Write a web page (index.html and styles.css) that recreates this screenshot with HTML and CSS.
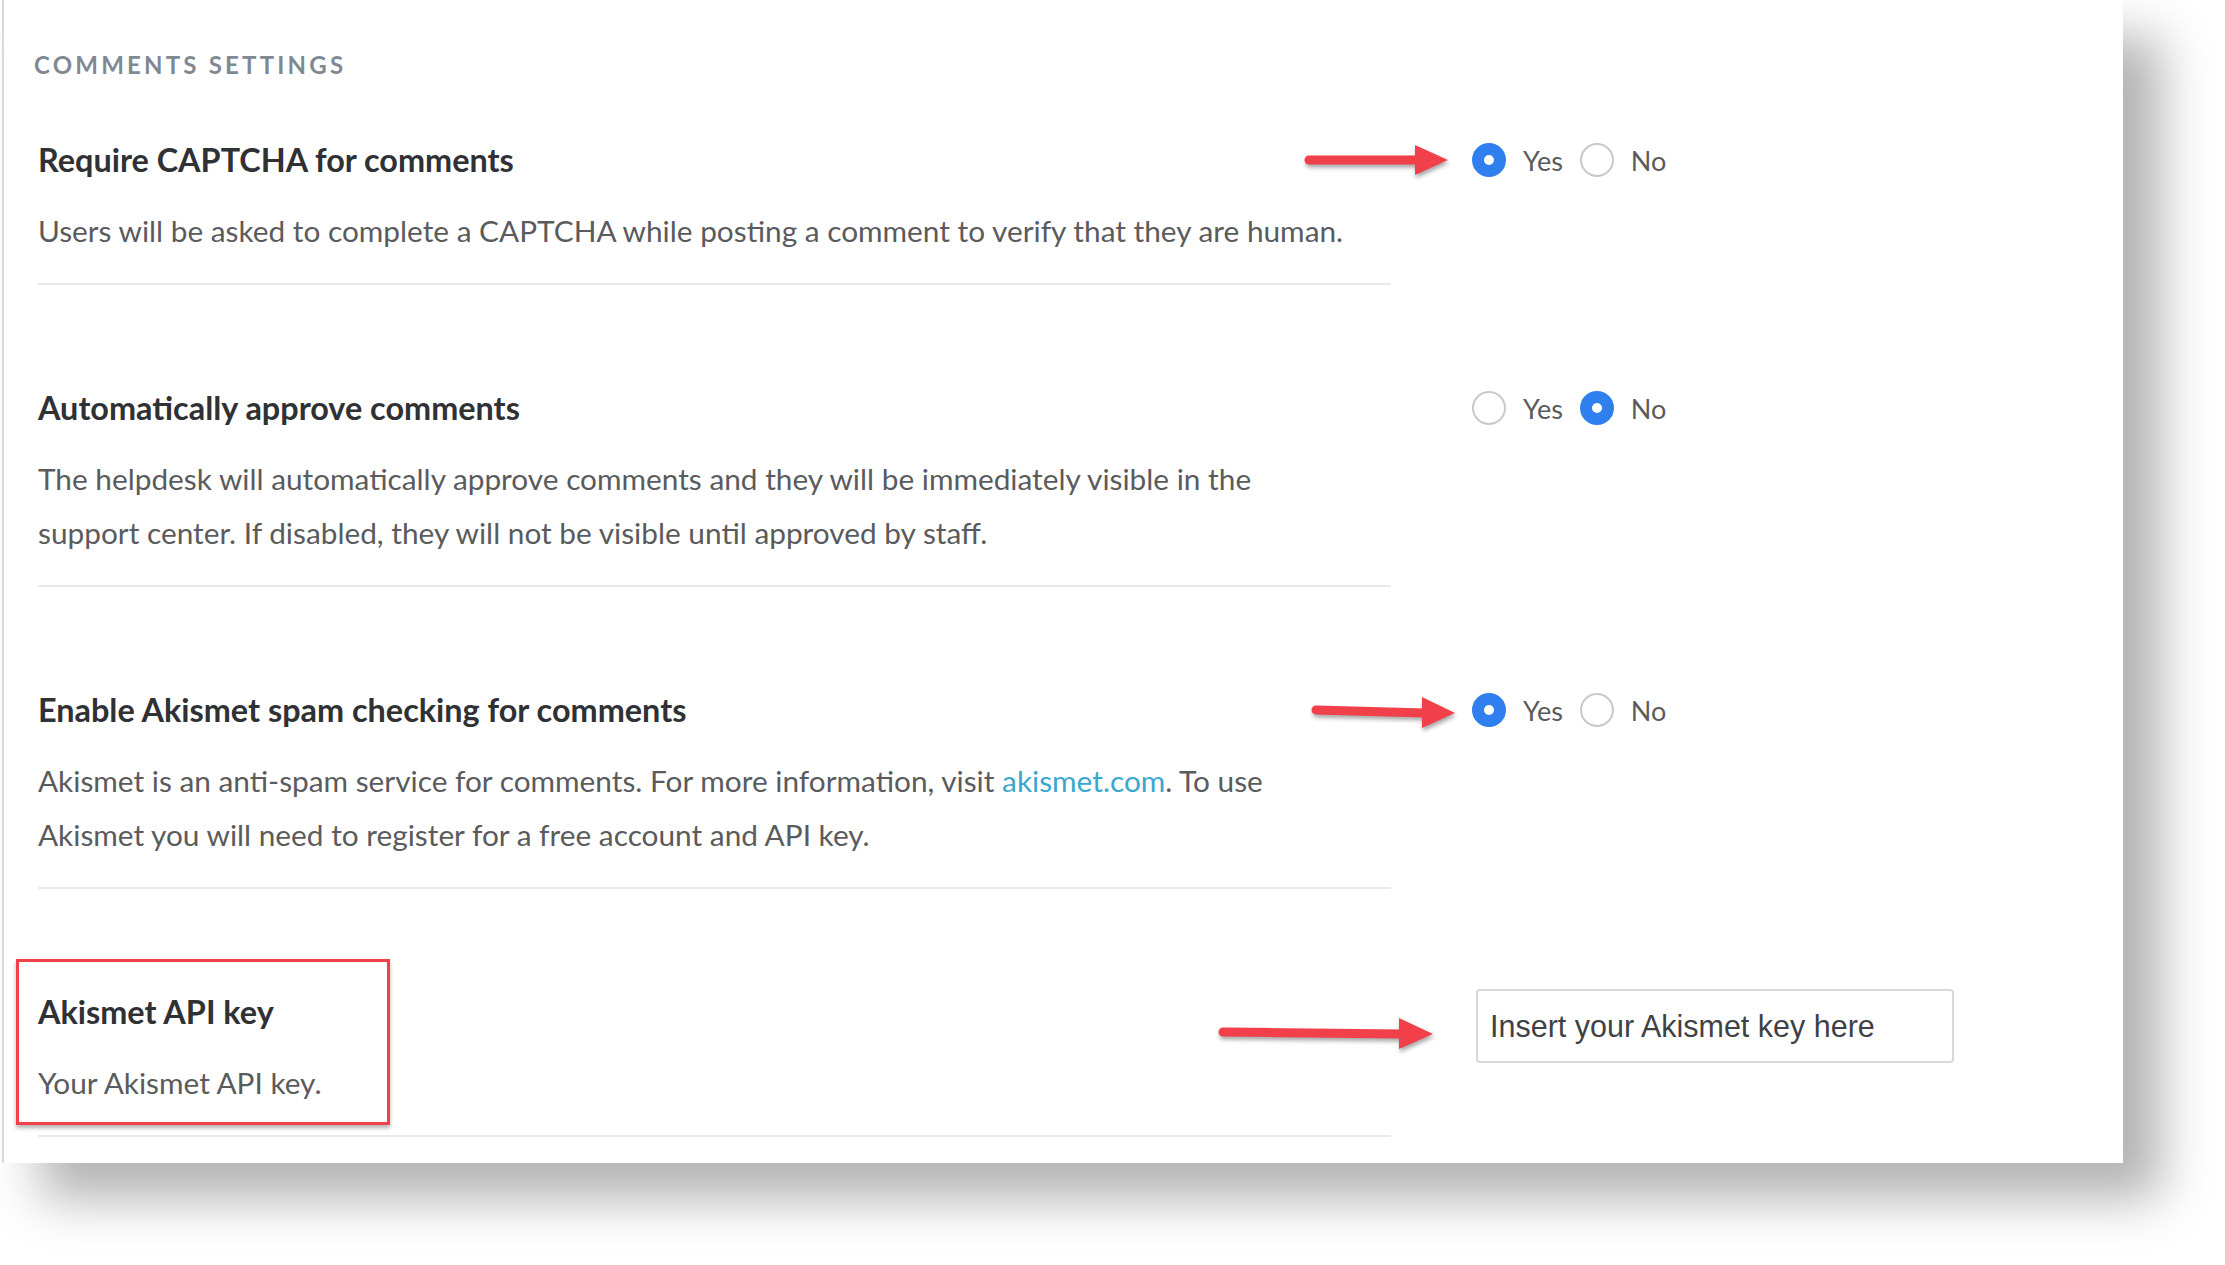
FILE: index.html
```html
<!DOCTYPE html>
<html lang="en">
<head>
  <meta charset="UTF-8" />
  <meta name="viewport" content="width=device-width, initial-scale=1.0" />
  <title>Comments settings</title>
  <link rel="stylesheet" href="styles.css">
</head>
<body>
  <div class="panel">
    <h3 class="section-title">COMMENTS SETTINGS</h3>

    <div class="setting first">
      <div class="setting-text">
        <h4>Require CAPTCHA for comments</h4>
        <p>Users will be asked to complete a CAPTCHA while posting a comment to verify that they are human.</p>
      </div>
      <div class="setting-control">
        <svg class="arrow arrow-captcha" viewBox="0 0 145 34"><line x1="6" y1="17" x2="116" y2="17" /><polygon points="112,2 145,17 112,32" /></svg>
        <label class="radio"><span class="dot checked"></span>Yes</label>
        <label class="radio"><span class="dot"></span>No</label>
      </div>
    </div>

    <div class="setting">
      <div class="setting-text">
        <h4>Automatically approve comments</h4>
        <p>The helpdesk will automatically approve comments and they will be immediately visible in the<br>support center. If disabled, they will not be visible until approved by staff.</p>
      </div>
      <div class="setting-control">
        <label class="radio"><span class="dot"></span>Yes</label>
        <label class="radio"><span class="dot checked"></span>No</label>
      </div>
    </div>

    <div class="setting">
      <div class="setting-text">
        <h4>Enable Akismet spam checking for comments</h4>
        <p>Akismet is an anti-spam service for comments. For more information, visit <a href="#">akismet.com</a>. To use<br>Akismet you will need to register for a free account and API key.</p>
      </div>
      <div class="setting-control">
        <svg class="arrow arrow-akismet" viewBox="0 0 145 34"><line x1="6" y1="15" x2="116" y2="18" /><polygon points="112,2 145,18 112,33" /></svg>
        <label class="radio"><span class="dot checked"></span>Yes</label>
        <label class="radio"><span class="dot"></span>No</label>
      </div>
    </div>

    <div class="setting last">
      <div class="setting-text">
        <div class="highlight"></div>
        <h4>Akismet API key</h4>
        <p>Your Akismet API key.</p>
      </div>
      <div class="setting-control">
        <svg class="arrow arrow-key" viewBox="0 0 216 34"><line x1="6" y1="16" x2="186" y2="18" /><polygon points="182,2 216,18 182,33" /></svg>
        <input class="key-input" type="text" value="Insert your Akismet key here" />
      </div>
    </div>
  </div>
</body>
</html>
```

FILE: styles.css
```css
body {
  margin: 0;
  min-height: 1265px;
  background: #ffffff;
  font-family: 'Lato', 'Open Sans', sans-serif;
}
.panel {
  position: relative;
  width: 2121px;
  height: 1163px;
  margin-left: 2px;
  padding-left: 34px;
  box-sizing: border-box;
  background: #ffffff;
  border-left: 2px solid #d9d9d9;
  box-shadow: 38px 36px 48px rgba(0, 0, 0, 0.3);
}
.section-title {
  margin: 0 0 0 -4px;
  padding-top: 50px;
  font-size: 24px;
  line-height: 30px;
  font-weight: 700;
  letter-spacing: 3.2px;
  color: #7f8993;
}
.setting {
  display: grid;
  grid-template-columns: 1353px 1fr;
  column-gap: 81px;
  padding-top: 103px;
}
.setting.first {
  padding-top: 60px;
}
.setting-text {
  position: relative;
  padding-bottom: 25px;
  border-bottom: 2px solid #e9e9e9;
}
.setting-text h4 {
  margin: 0 0 24px;
  font-size: 32.4px;
  line-height: 40px;
  font-weight: 700;
  color: #2f3134;
}
.setting-text p {
  margin: 0;
  font-size: 29.8px;
  line-height: 54px;
  color: #5a5b5d;
}
.setting-text a {
  color: #3aa7cf;
  text-decoration: none;
}
.setting-control {
  position: relative;
  display: flex;
  align-items: center;
  gap: 17px;
  height: 40px;
}
.radio {
  display: flex;
  align-items: center;
  gap: 17px;
  font-size: 27px;
  color: #5b5b5b;
}
.dot {
  width: 34px;
  height: 34px;
  box-sizing: border-box;
  border-radius: 50%;
  border: 2px solid #c9c9c9;
  background: #ffffff;
}
.dot.checked {
  border: 12px solid #2f80ee;
}
.key-input {
  margin: -3px 0 0 4px;
  align-self: flex-start;
  width: 478px;
  height: 74px;
  box-sizing: border-box;
  padding: 0 12px;
  border: 2px solid #d8d8d8;
  border-radius: 4px;
  font-family: 'Liberation Sans', Arial, sans-serif;
  font-size: 30.5px;
  color: #3f4245;
}
.arrow {
  position: absolute;
  top: 50%;
  height: 34px;
  margin-top: -17px;
  filter: drop-shadow(1px 3px 2px rgba(0, 0, 0, 0.35));
}
.arrow line {
  stroke: #f2404a;
  stroke-width: 9;
  stroke-linecap: round;
}
.arrow polygon {
  fill: #f2404a;
}
.arrow-captcha {
  right: calc(100% + 24px);
  width: 145px;
}
.arrow-akismet {
  right: calc(100% + 17px);
  width: 145px;
  margin-top: -15px;
}
.arrow-key {
  right: calc(100% + 39px);
  width: 216px;
  margin-top: 4px;
}
.highlight {
  position: absolute;
  top: -33px;
  left: -22px;
  width: 374px;
  height: 166px;
  box-sizing: border-box;
  border: 3px solid #f2404a;
  box-shadow: 0 3px 4px rgba(0, 0, 0, 0.3);
}
```
